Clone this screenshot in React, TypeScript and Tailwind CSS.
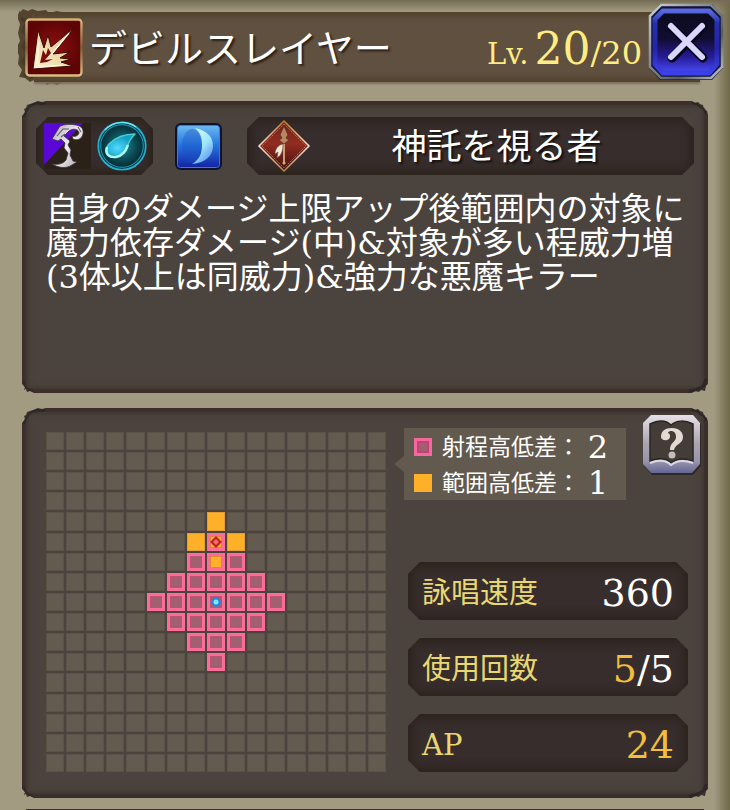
import type { ReactNode } from "react";

const GRID_SIZE = 17;
const CASTER = { row: 8, col: 8 };
const TARGET = { row: 5, col: 8 };

const octagon =
  "[clip-path:polygon(12px_0,calc(100%-12px)_0,100%_12px,100%_calc(100%-12px),calc(100%-12px)_100%,12px_100%,0_calc(100%-12px),0_12px)]";

const distance = (row: number, col: number, from: { row: number; col: number }) =>
  Math.abs(row - from.row) + Math.abs(col - from.col);

const SkillIcon = () => (
  <svg viewBox="0 0 58 59" className="h-[59px] w-[58px] shrink-0" aria-hidden="true">
    <defs>
      <linearGradient id="claw" x1="0" y1="1" x2="1" y2="0">
        <stop offset="0" stopColor="#fff4d4" />
        <stop offset="0.5" stopColor="#ecd6a4" />
        <stop offset="1" stopColor="#d8b88c" />
      </linearGradient>
      <linearGradient id="skillGold" x1="0" y1="0" x2="0" y2="1">
        <stop offset="0" stopColor="#d8b478" />
        <stop offset="0.5" stopColor="#80603a" />
        <stop offset="1" stopColor="#dcbf86" />
      </linearGradient>
      <radialGradient id="skillRed">
        <stop offset="0" stopColor="#8d1010" />
        <stop offset="1" stopColor="#5e0405" />
      </radialGradient>
    </defs>
    <rect x="0" y="0" width="58" height="59" rx="4" fill="#3a2a1c" />
    <rect x="1.5" y="1.5" width="55" height="56" rx="3" fill="url(#skillRed)" stroke="url(#skillGold)" strokeWidth="2.5" />
    <path
      d="M8 51 13 12l6 18 4-13 3 12L49 10 33 30l-5 6 17-2-10 6 11 1-10 3 12 4z"
      fill="url(#claw)"
      stroke="#3b0808"
      strokeWidth="1"
    />
    <path d="m15 45 3-13 3 5 2-7 3 5-6 7 8-1-6 3z" fill="#7b0c0c" />
    <path d="M26 37 44 15M12 46l2-22M14 49l24-2" stroke="#fffaf0" strokeWidth="1.2" fill="none" />
  </svg>
);

const ScytheIcon = () => (
  <svg viewBox="0 0 47 46" className="h-[46px] w-[47px] shrink-0" aria-hidden="true">
    <defs>
      <linearGradient id="bone" x1="0" y1="0" x2="1" y2="1">
        <stop offset="0" stopColor="#b0a9b5" />
        <stop offset="0.5" stopColor="#f2eff2" />
        <stop offset="1" stopColor="#a19a9c" />
      </linearGradient>
    </defs>
    <rect width="47" height="46" fill="#2b2118" />
    <path d="M0 0h39L0 42z" fill="#5a08d8" />
    <path
      d="M8 16 16 3c5-2 11-2 16-1 6 1 8 5 7 9-1 5-6 7-10 5l-1-3c3 1 6 0 7-3 0-4-6-5-10-2l-5 5 6 5-2 4 3 5-1 5 3 6 4 1-5 3c-6 4-13 3-20-1 6 1 11 0 14-4l2-7-4-5 1-5-4-4-3 2z"
      fill="url(#bone)"
      stroke="#37303e"
      strokeWidth="0.8"
    />
    <path d="m13 13 6-7 6 0M17 14l4-3M34 4l3 5" stroke="#5e5764" strokeWidth="1.1" fill="none" />
  </svg>
);

const CometIcon = () => (
  <svg viewBox="0 0 50 50" className="size-[50px] shrink-0" aria-hidden="true">
    <defs>
      <radialGradient id="orb">
        <stop offset="0" stopColor="#1b8a96" />
        <stop offset="0.6" stopColor="#0c4650" />
        <stop offset="1" stopColor="#042229" />
      </radialGradient>
      <radialGradient id="comet" cx="0.4" cy="0.6">
        <stop offset="0" stopColor="#4fdcff" />
        <stop offset="1" stopColor="#169fc4" />
      </radialGradient>
    </defs>
    <circle cx="25" cy="25" r="24.5" fill="url(#orb)" />
    <circle cx="25" cy="25" r="23.7" fill="none" stroke="#26b0cd" strokeWidth="1.8" />
    <circle cx="25" cy="25" r="21.3" fill="none" stroke="#1c8fae" strokeWidth="1.2" />
    <path d="M8 9a23.500 23.500 0 0 1 31-3" stroke="#6be8ec" strokeWidth="1.5" fill="none" />
    <path
      d="M38 13c-10 0-20 4-26 10-6 7-3 14 6 13 7-1 11-6 13-12 1-4 3-7 7-11z"
      fill="url(#comet)"
      stroke="#49cfd6"
      strokeWidth="1.5"
      strokeLinejoin="round"
    />
    <path d="M10 26c-2 7 2 11 9 10 6-1 10-6 12-12" stroke="#aef8f2" strokeWidth="2.4" fill="none" />
  </svg>
);

const MoonIcon = () => (
  <svg viewBox="0 0 47 47" className="size-[47px] shrink-0" aria-hidden="true">
    <defs>
      <linearGradient id="night" x1="0" y1="0" x2="0" y2="1">
        <stop offset="0" stopColor="#6db9f0" />
        <stop offset="0.45" stopColor="#2678e0" />
        <stop offset="1" stopColor="#1422a4" />
      </linearGradient>
      <linearGradient id="moon" x1="0" y1="0" x2="0.6" y2="1">
        <stop offset="0" stopColor="#e3fbff" />
        <stop offset="0.6" stopColor="#9ce6fb" />
        <stop offset="1" stopColor="#6299ee" />
      </linearGradient>
    </defs>
    <rect width="47" height="47" rx="6" fill="#0b1333" />
    <rect x="2.5" y="2.5" width="42" height="42" rx="3" fill="url(#night)" stroke="#387bd8" />
    <ellipse cx="17" cy="23" rx="10" ry="17" fill="#1b4cc0" opacity="0.35" />
    <path d="M20 5c14 3 18 10 18 18 0 9-7 17-21 18 7-4 10-10 10-19 0-8-2-13-7-17z" fill="url(#moon)" />
  </svg>
);

const SpearIcon = () => (
  <svg viewBox="0 0 54 54" className="size-[54px] shrink-0" aria-hidden="true">
    <defs>
      <linearGradient id="crest" x1="0" y1="0" x2="0" y2="1">
        <stop offset="0" stopColor="#6f241c" />
        <stop offset="0.45" stopColor="#932c20" />
        <stop offset="1" stopColor="#3d1114" />
      </linearGradient>
      <linearGradient id="crestEdge" x1="0" y1="0" x2="0" y2="1">
        <stop offset="0" stopColor="#c47a2a" />
        <stop offset="0.5" stopColor="#f4e7df" />
        <stop offset="1" stopColor="#b98444" />
      </linearGradient>
    </defs>
    <path d="M27 2 52 27 27 52 2 27z" fill="url(#crest)" stroke="url(#crestEdge)" strokeWidth="1.5" />
    <path d="M27 5 49 27 27 49 5 27z" fill="none" stroke="#c58456" strokeWidth="0.8" strokeDasharray="1.5 1" />
    <path d="M27 20v25" stroke="#e3c08b" strokeWidth="1.6" />
    <path d="m27 7 4 9-2 3 3 2-5 4-5-4 3-2-2-3z" fill="#b98562" stroke="#563020" strokeWidth="0.8" />
    <path d="M26 25c-5 1-8 5-8 10l3-2-1 6c5-3 6-8 6-14z" fill="#f3eadb" stroke="#6c4630" strokeWidth="0.6" />
    <path d="m25 44 2-2 2 2-2 2z" fill="#d4a65a" />
  </svg>
);

const CloseIcon = () => (
  <svg viewBox="0 0 76 78" className="h-[78px] w-[76px]" aria-hidden="true">
    <defs>
      <linearGradient id="closeRim" x1="0" y1="0" x2="1" y2="1">
        <stop offset="0" stopColor="#cbd0d7" />
        <stop offset="0.35" stopColor="#8d929e" />
        <stop offset="0.7" stopColor="#565b68" />
        <stop offset="1" stopColor="#c5c8d0" />
      </linearGradient>
      <linearGradient id="closeFill" x1="0" y1="0" x2="0" y2="1">
        <stop offset="0" stopColor="#0b0b1c" />
        <stop offset="0.45" stopColor="#110d31" />
        <stop offset="0.75" stopColor="#261c98" />
        <stop offset="1" stopColor="#4b4cf8" />
      </linearGradient>
      <linearGradient id="closeGlow" x1="0" y1="0" x2="0" y2="1">
        <stop offset="0" stopColor="#5a68e0" />
        <stop offset="0.2" stopColor="#2430b0" />
        <stop offset="0.6" stopColor="#2422a8" />
        <stop offset="1" stopColor="#3c40ea" />
      </linearGradient>
    </defs>
    <path d="M12 1h52l11 12v52L64 77H12L1 65V13z" fill="#1b1b2a" />
    <path d="M13 2h50l11 11v51L63 75H13L2 64V13z" fill="#121431" stroke="url(#closeRim)" strokeWidth="2.5" />
    <path d="M15 8h46l8 8v45l-8 9H15l-8-9V16z" fill="url(#closeFill)" stroke="url(#closeGlow)" strokeWidth="5" />
    <path d="m24 24 31 31M55 24 24 55" stroke="#08081c" strokeWidth="9" strokeLinecap="round" />
    <path d="m23 23 31 31M54 23 23 54" stroke="#d9d7fb" strokeWidth="6" strokeLinecap="round" />
  </svg>
);

const HelpIcon = () => (
  <svg viewBox="0 0 60 62" className="h-[62px] w-[60px]" aria-hidden="true">
    <defs>
      <linearGradient id="helpRim" x1="0" y1="0" x2="0" y2="1">
        <stop offset="0" stopColor="#e6e0e9" />
        <stop offset="0.5" stopColor="#aaa3ae" />
        <stop offset="0.8" stopColor="#9894ad" />
        <stop offset="1" stopColor="#626692" />
      </linearGradient>
    </defs>
    <path d="M10 3h42l7 8v41l-8 9H10l-8-9V11z" fill="#2e2828" />
    <path d="M9 1h42l7 8v41l-8 9H9l-8-9V9z" fill="url(#helpRim)" />
    <path d="M8 10c8-4 16-4 21 1 5-5 14-5 22-1v37c-8-3-16-3-22 2-5-5-13-5-21-2z" fill="#443c36" stroke="#282421" strokeWidth="1.5" />
    <path d="M8 49c8-3 16-3 21 2 6-5 14-5 22-2" stroke="#dcd9e4" strokeWidth="2" fill="none" />
    <path
      d="M19 23c0-6 4-9 11-9 7 0 11 4 11 9 0 7-8 7-9 13h-4c0-8 6-8 6-13 0-4-2-6-5-6-2 0-3 1-3 2 3 1 3 6-1 7-3 1-6-1-6-3z"
      fill="#e3dad2"
    />
    <circle cx="30" cy="41" r="3.500" fill="#c5bdba" />
  </svg>
);

const TornEdge = () => (
  <svg viewBox="0 0 80 78" className="absolute -left-1 -top-1 h-[78px] w-20" aria-hidden="true">
    <path
      d="M2 4 5 1l5 2 4-2 6 2 8-1 3 3 8-2 4 1h35v66H46l-5 3-5-2-5 3-6-3-4 3-5-2-4 2-5-4-6-1 3-7-4-6 1-8-3-8 4-7-2-8 2-9-3-7 3-7z"
      fill="#54442f"
    />
    <path d="m3 10 5 5-3 8 5 7-5 8 4 7-4 9 7 6-5 7 9 3 6-1" stroke="#3e3426" strokeWidth="3" fill="none" opacity="0.65" />
    <path d="m28 76 6-2 5 2 6-3" stroke="#3e3426" strokeWidth="2" fill="none" opacity="0.6" />
  </svg>
);

const TornCorners = () => (
  <>
    <svg viewBox="0 0 24 18" className="absolute left-0 top-0 h-[18px] w-6" aria-hidden="true">
      <path d="M0 0h24l-4 1-4-1-5 2-3 1-3 1-1 3-2 1 1 3-3 4z" fill="#a39b81" />
      <path d="M24 2l-5 1-4-1-5 2-3 2-3 5-2 5" stroke="#242327" strokeWidth="2" fill="none" opacity="0.7" />
    </svg>
    <svg viewBox="0 0 24 18" className="absolute right-0 top-0 h-[18px] w-6" aria-hidden="true">
      <path d="M24 0H8l3 2 3-1 2 2 3 1 1 4 3 2 1 4z" fill="#a39b81" />
      <path d="m8 2 5 1 3 3 4 2 2 5" stroke="#242327" strokeWidth="2" fill="none" opacity="0.8" />
    </svg>
    <svg viewBox="0 0 24 18" className="absolute bottom-0 left-0 h-[18px] w-6" aria-hidden="true">
      <path d="M0 18h12l-4-2-3 1-1-3-2 1 1-3-3-3z" fill="#a39b81" />
      <path d="m2 6 1 5 3 3 5 2" stroke="#2c2521" strokeWidth="2" fill="none" opacity="0.6" />
    </svg>
    <svg viewBox="0 0 24 18" className="absolute bottom-0 right-0 h-[18px] w-6" aria-hidden="true">
      <path d="M24 18H8l3-2 4 1 2-2 4 1 1-5 2-2z" fill="#a39b81" />
      <path d="m5 16 6-1 5-2 4-3 2-6" stroke="#272126" strokeWidth="3" fill="none" opacity="0.7" />
    </svg>
  </>
);

const Panel = ({ className, children }: { className: string; children: ReactNode }) => (
  <section
    className={`relative bg-[#4b433e] shadow-[inset_0_0_3px_4px_#3d2e2c,inset_0_0_10px_5px_#433a30] ${className}`}
  >
    <TornCorners />
    {children}
  </section>
);

const Plate = ({ className, children }: { className: string; children: ReactNode }) => (
  <div
    className={`flex h-[58px] items-center bg-[#362d2c] shadow-[inset_0_0_10px_4px_#2c221b] ${octagon} ${className}`}
  >
    {children}
  </div>
);

const RangeCell = ({ row, col }: { row: number; col: number }) => {
  const reachable = distance(row, col, CASTER) <= 3;
  const inArea = distance(row, col, TARGET) <= 1;
  const isCaster = distance(row, col, CASTER) === 0;
  const isTarget = distance(row, col, TARGET) === 0;

  if (!reachable) {
    return inArea ? (
      <div className="border border-[#e39d30] bg-[#ffb029]" />
    ) : (
      <div className="border border-[#5c5348] bg-[#635b4f]" />
    );
  }

  return (
    <div className="border-[3px] border-[#fb6c99] bg-[#a06070]">
      <div
        className={
          inArea
            ? "flex size-full items-center justify-center border border-[#e0843f] bg-[#ffb029]"
            : "flex size-full items-center justify-center border border-[#bd5475]"
        }
      >
        {isTarget && (
          <svg viewBox="0 0 12 12" className="size-3 shrink-0" aria-hidden="true">
            <path d="m6 1.5 4.5 4.5L6 10.5 1.5 6z" fill="#f06a65" stroke="#bd1d26" strokeWidth="2" />
          </svg>
        )}
        {isCaster && (
          <svg viewBox="0 0 12 12" className="size-3 shrink-0" aria-hidden="true">
            <path d="M6 .5 11.5 6 6 11.5.5 6z" fill="#168af0" />
            <circle cx="6" cy="6" r="2.5" fill="#7deaff" />
          </svg>
        )}
      </div>
    </div>
  );
};

const RangeGrid = () => (
  <div className="mt-1 grid aspect-square w-[340px] shrink-0 grid-cols-17 grid-rows-17 gap-[2px]">
    {Array.from({ length: GRID_SIZE * GRID_SIZE }, (_, i) => (
      <RangeCell key={i} row={Math.floor(i / GRID_SIZE)} col={i % GRID_SIZE} />
    ))}
  </div>
);

const Stat = ({ label, children }: { label: string; children: ReactNode }) => (
  <Plate className="justify-between px-3.5 pt-1">
    <dt className="text-[29px] leading-none text-[#e9d772]">{label}</dt>
    <dd className="text-[38px] leading-none text-white">{children}</dd>
  </Plate>
);

export default function App() {
  return (
    <main className="min-h-screen bg-[#a39b81] bg-[linear-gradient(to_bottom,#746b53,transparent_12px),linear-gradient(to_left,#6f694a,#817a5d_6px,transparent_16px)] px-[22px] pt-3 font-['DejaVu_Serif','Noto_Sans_CJK_JP',serif]">
      {/* Title bar */}
      <header className="relative mb-[19px] h-[70px]">
        <TornEdge />
        <div className="relative ml-3 mr-2 flex h-full items-center bg-[#5f503f] pr-[58px] shadow-[inset_0_5px_4px_#54442f,inset_0_-5px_4px_#54442f,0_2px_2px_#77705c]">
          <div className="-ml-[9px]">
            <SkillIcon />
          </div>
          <h1 className="ml-1.5 flex-1 whitespace-nowrap pt-1 text-[38px] leading-none text-white [text-shadow:2px_2px_2px_#2c2119]">
            デビルスレイヤー
          </h1>
          <p className="flex items-baseline whitespace-nowrap pt-1 leading-none text-[#ffec82]">
            <span className="mr-1.5 text-[29px]">Lv.</span>
            <span className="text-[44px]">20</span>
            <span className="text-[32px]">/20</span>
          </p>
        </div>
        <button type="button" aria-label="閉じる" className="absolute -right-4 -top-[9px] cursor-pointer">
          <CloseIcon />
        </button>
      </header>

      {/* Skill description */}
      <Panel className="mb-[15px] min-h-[292px] px-3.5 pt-4">
        <div className="flex items-center">
          <Plate className="w-[117px] shrink-0 gap-1.5 pl-2">
            <ScytheIcon />
            <CometIcon />
          </Plate>
          <div className="ml-[22px] mr-[25px] shrink-0">
            <MoonIcon />
          </div>
          <Plate className="flex-1 pl-2.5">
            <SpearIcon />
            <h2 className="flex-1 pr-3 pt-0.5 text-center text-[35px] leading-none text-white [text-shadow:2px_2px_2px_#15100d]">
              神託を視る者
            </h2>
          </Plate>
        </div>
        <p className="mt-[17px] whitespace-nowrap pl-2.5 text-[32px] leading-[34px] text-white">
          自身のダメージ上限アップ後範囲内の対象に
          <br />
          魔力依存ダメージ(中)&amp;対象が多い程威力増
          <br />
          (3体以上は同威力)&amp;強力な悪魔キラー
        </p>
      </Panel>

      {/* Range and stats */}
      <Panel className="mb-[11px] flex gap-[22px] pb-[26px] pl-6 pr-5 pt-5">
        <RangeGrid />
        <div className="flex flex-1 flex-col justify-between">
          <div className="relative -ml-1 w-[222px] bg-[#625a4f] pl-2.5 text-white">
            <span className="absolute -left-2.5 top-7 h-4 w-2.5 bg-[#625a4f] [clip-path:polygon(100%_0,100%_100%,0_50%)]" />
            <dl>
              <div className="flex h-9 items-center pt-0.5">
                <span className="mr-2.5 size-[18px] border-[3px] border-[#f5689c] bg-[#a06070] shadow-[inset_0_0_0_2px_#c2417b]" />
                <dt className="text-[23px] leading-none">射程高低差：</dt>
                <dd className="w-9 text-center text-[32px] leading-none">2</dd>
              </div>
              <div className="flex h-9 items-center pt-0.5">
                <span className="mr-2.5 size-[18px] bg-[#ffb029]" />
                <dt className="text-[23px] leading-none">範囲高低差：</dt>
                <dd className="w-9 text-center text-[32px] leading-none">1</dd>
              </div>
            </dl>
          </div>
          <dl className="flex flex-col gap-[18px]">
            <Stat label="詠唱速度">360</Stat>
            <Stat label="使用回数">
              <span className="text-[#f3bd3d]">5</span>/5
            </Stat>
            <Stat label="AP">
              <span className="text-[#f3bd3d]">24</span>
            </Stat>
          </dl>
        </div>
        <button type="button" aria-label="ヘルプ" className="absolute right-1.5 top-1.5 cursor-pointer">
          <HelpIcon />
        </button>
      </Panel>

      <div className="mx-1 h-px bg-[#3d2e2c]" />
    </main>
  );
}
